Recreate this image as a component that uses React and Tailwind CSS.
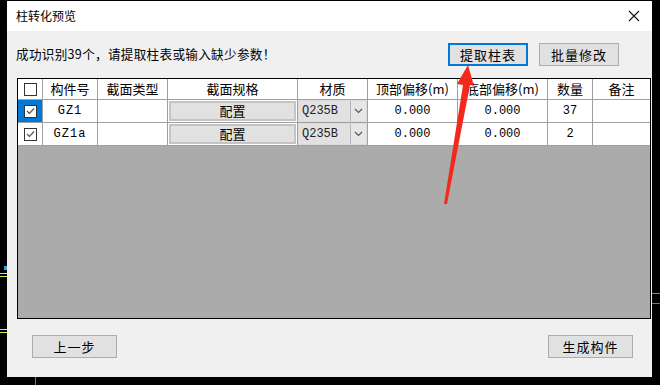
import React from 'react';

const cn = '"Microsoft YaHei", "Noto Sans CJK SC", sans-serif';
const mono = '"Liberation Mono", "Noto Sans CJK SC", monospace';

const COLS = [
  { key: 'chk', w: 'w-[25px]' },
  { key: 'id', label: '构件号', w: 'w-[55px]' },
  { key: 'type', label: '截面类型', w: 'w-[70px]' },
  { key: 'spec', label: '截面规格', w: 'w-[130px]' },
  { key: 'mat', label: '材质', w: 'w-[70px]' },
  { key: 'top', label: '顶部偏移(m)', w: 'w-[90px]' },
  { key: 'bot', label: '底部偏移(m)', w: 'w-[90px]' },
  { key: 'qty', label: '数量', w: 'w-[45px]' },
  { key: 'note', label: '备注', w: 'w-[57px]' },
];

const ROWS = [
  { id: 'GZ1', qty: '37', selected: true },
  { id: 'GZ1a', qty: '2', selected: false },
];

function CheckBox({ checked }) {
  return (
    <div className="w-[13px] h-[13px] border border-[#333333] bg-white flex items-center justify-center">
      {checked && (
        <svg width="9" height="8" viewBox="0 0 9 8">
          <path d="M1 4 L3.5 6.5 L8 1.5" fill="none" stroke="#555" strokeWidth="1.2" />
        </svg>
      )}
    </div>
  );
}

function WinButton({ children, focused, className = '' }) {
  return (
    <div
      className={
        'h-[23px] flex items-center justify-center bg-[#e1e1e1] text-[13px] text-black tracking-[1px] ' +
        (focused ? 'border-2 border-[#0078d7] ' : 'border border-[#adadad] ') +
        className
      }
    >
      {children}
    </div>
  );
}

function Row({ row }) {
  return (
    <div className="flex h-[23px] bg-white border-b border-[#a0a0a0]">
      <div
        className={
          'w-[25px] border-r border-[#a0a0a0] flex items-center justify-center ' +
          (row.selected ? 'bg-[#0078d7]' : '')
        }
      >
        <CheckBox checked />
      </div>
      <div className="w-[55px] border-r border-[#a0a0a0] flex items-center justify-center text-[12px] tracking-[1px]" style={{ fontFamily: mono }}>
        {row.id}
      </div>
      <div className="w-[70px] border-r border-[#a0a0a0]" />
      <div className="w-[130px] border-r border-[#a0a0a0] p-[1px]">
        <div className="h-full border-2 border-[#c4c4c4] bg-[#e1e1e1] flex items-center justify-center text-[13px]">
          配置
        </div>
      </div>
      <div className="w-[70px] border-r border-[#a0a0a0] flex bg-[#dcdcdc] p-[1px]">
        <div className="flex-1 bg-[#e1e1e1] flex items-center pl-[3px] text-[12px] text-[#222]" style={{ fontFamily: mono }}>
          Q235B
        </div>
        <div className="w-[16px] bg-[#e6e6e6] border-l border-[#b4b4b4] flex items-center justify-center">
          <svg width="9" height="6" viewBox="0 0 9 6">
            <path d="M1 1 L4.5 4.5 L8 1" fill="none" stroke="#555" strokeWidth="1.1" />
          </svg>
        </div>
      </div>
      <div className="w-[90px] border-r border-[#a0a0a0] flex items-center justify-center text-[12px]" style={{ fontFamily: mono }}>
        0.000
      </div>
      <div className="w-[90px] border-r border-[#a0a0a0] flex items-center justify-center text-[12px]" style={{ fontFamily: mono }}>
        0.000
      </div>
      <div className="w-[45px] border-r border-[#a0a0a0] flex items-center justify-center text-[12px]" style={{ fontFamily: mono }}>
        {row.qty}
      </div>
      <div className="w-[57px]" />
    </div>
  );
}

export default function App() {
  return (
    <div className="w-[660px] h-[385px] bg-black relative overflow-hidden" style={{ fontFamily: cn }}>
      {/* CAD background lines */}
      <div className="absolute left-0 top-[273px] w-[7px] h-[1px] bg-[#e6e65a]" />
      <div className="absolute left-0 top-[276px] w-[7px] h-[1px] bg-[#e6e65a]" />
      <div className="absolute left-0 top-[329px] w-[7px] h-[1px] bg-[#e6e65a]" />
      <div className="absolute left-0 top-[332px] w-[7px] h-[1px] bg-[#e6e65a]" />
      <div className="absolute left-[4px] top-[266px] w-[3px] h-[4px] bg-[#3aa0d8]" />
      <div className="absolute right-0 top-[293px] w-[8px] h-[1px] bg-[#3aa0d8]" />
      <div className="absolute right-0 top-[303px] w-[8px] h-[1px] bg-[#777]" />
      <div className="absolute left-[35px] top-[377px] w-[1px] h-[8px] bg-[#777]" />

      <div className="ml-[7px] mt-[1px] w-[645px] h-[376px] bg-[#f0f0f0] flex flex-col">
        {/* title bar */}
        <div className="h-[30px] bg-white flex items-center justify-between pl-[9px] pr-[12px] shrink-0">
          <span className="text-[12px] text-black">柱转化预览</span>
          <svg width="12" height="12" viewBox="0 0 12 12">
            <path d="M1 1 L11 11 M11 1 L1 11" stroke="#111" strokeWidth="1.1" />
          </svg>
        </div>

        {/* message + buttons */}
        <div className="flex items-center mt-[12px] h-[23px] pl-[9px] pr-[33px]">
          <span className="text-[12.6px] text-black flex-1 tracking-[0.3px]">成功识别39个，请提取柱表或输入缺少参数！</span>
          <WinButton focused className="w-[80px]">提取柱表</WinButton>
          <WinButton className="w-[80px] ml-[11px]">批量修改</WinButton>
        </div>

        {/* table */}
        <div className="ml-[10px] mt-[12px] w-[634px] h-[241px] border border-black bg-[#ababab] flex flex-col">
          <div className="flex h-[21px] bg-white border-b border-[#a0a0a0] text-[13px] text-black">
            {COLS.map((c, i) => (
              <div
                key={c.key}
                className={
                  c.w + ' flex items-center justify-center ' + (i < COLS.length - 1 ? 'border-r border-[#a0a0a0]' : '')
                }
              >
                {c.key === 'chk' ? <CheckBox checked={false} /> : c.label}
              </div>
            ))}
          </div>
          {ROWS.map((r) => (
            <Row key={r.id} row={r} />
          ))}
        </div>

        {/* bottom buttons */}
        <div className="flex justify-between mt-[16px] pl-[25px] pr-[19px]">
          <WinButton className="w-[85px]">上一步</WinButton>
          <WinButton className="w-[85px]">生成构件</WinButton>
        </div>
      </div>

      {/* red annotation arrow */}
      <svg className="absolute left-0 top-0 pointer-events-none" width="660" height="385">
        <polygon points="468,65 474,86 470,85 447,204 444,204 463,85 457,84" fill="#f22a1e" />
      </svg>
    </div>
  );
}
